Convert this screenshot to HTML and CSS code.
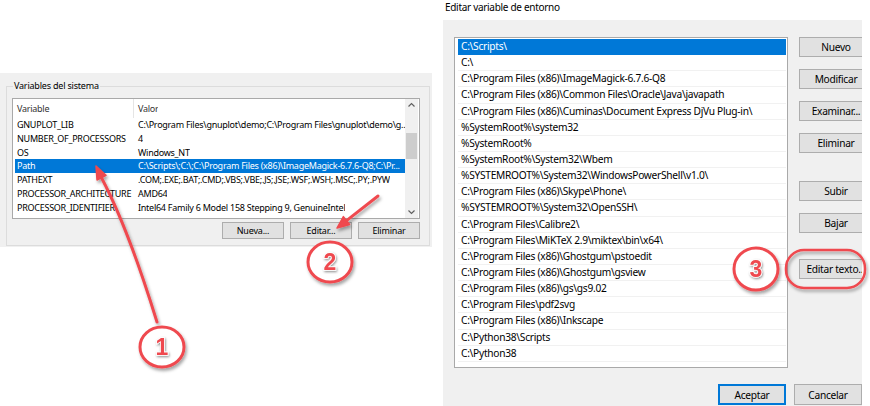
FILE: index.html
```html
<!DOCTYPE html>
<html lang="es">
<head>
<meta charset="utf-8">
<title>Variables de entorno</title>
<link rel="stylesheet" href="styles.css">
</head>
<body>
<div class="page">
  <section class="left">
    <div class="sys">
      <div class="group">
        <div class="group-label">Variables del sistema</div>
        <div class="lv">
          <div class="lv-body">
            <div class="lv-head"><span class="c1">Variable</span><span class="c2">Valor</span></div>
            <div class="lv-row"><span class="c1">GNUPLOT_LIB</span><span class="c2">C:\Program Files\gnuplot\demo;C:\Program Files\gnuplot\demo\g...</span></div>
            <div class="lv-row"><span class="c1">NUMBER_OF_PROCESSORS</span><span class="c2">4</span></div>
            <div class="lv-row"><span class="c1">OS</span><span class="c2">Windows_NT</span></div>
            <div class="lv-row sel"><span class="c1">Path</span><span class="c2">C:\Scripts\;C:\;C:\Program Files (x86)\ImageMagick-6.7.6-Q8;C:\Pr...</span></div>
            <div class="lv-row"><span class="c1">PATHEXT</span><span class="c2">.COM;.EXE;.BAT;.CMD;.VBS;.VBE;.JS;.JSE;.WSF;.WSH;.MSC;.PY;.PYW</span></div>
            <div class="lv-row"><span class="c1">PROCESSOR_ARCHITECTURE</span><span class="c2">AMD64</span></div>
            <div class="lv-row"><span class="c1">PROCESSOR_IDENTIFIER</span><span class="c2">Intel64 Family 6 Model 158 Stepping 9, GenuineIntel</span></div>
          </div>
          <div class="vscroll">
            <svg class="sb-arrow" width="13" height="12" viewBox="0 0 13 12"><path d="M3.5 7.5 L6.5 4.5 L9.5 7.5" fill="none" stroke="#606060" stroke-width="1.2"/></svg>
            <div class="sb-track"><div class="sb-thumb"></div></div>
            <svg class="sb-arrow" width="13" height="12" viewBox="0 0 13 12"><path d="M3.5 4.5 L6.5 7.5 L9.5 4.5" fill="none" stroke="#606060" stroke-width="1.2"/></svg>
          </div>
        </div>
        <div class="btns">
          <button class="btn-s">Nueva...</button>
          <button class="btn-s">Editar...</button>
          <button class="btn-s">Eliminar</button>
        </div>
      </div>
    </div>
  </section>

  <section class="right">
    <div class="title">Editar variable de entorno</div>
    <div class="dlg">
      <div class="dlg-main">
        <div class="lb">
          <div class="lb-row sel">C:\Scripts\</div>
          <div class="lb-row">C:\</div>
          <div class="lb-row">C:\Program Files (x86)\ImageMagick-6.7.6-Q8</div>
          <div class="lb-row">C:\Program Files (x86)\Common Files\Oracle\Java\javapath</div>
          <div class="lb-row">C:\Program Files (x86)\Cuminas\Document Express DjVu Plug-in\</div>
          <div class="lb-row">%SystemRoot%\system32</div>
          <div class="lb-row">%SystemRoot%</div>
          <div class="lb-row">%SystemRoot%\System32\Wbem</div>
          <div class="lb-row">%SYSTEMROOT%\System32\WindowsPowerShell\v1.0\</div>
          <div class="lb-row">C:\Program Files (x86)\Skype\Phone\</div>
          <div class="lb-row">%SYSTEMROOT%\System32\OpenSSH\</div>
          <div class="lb-row">C:\Program Files\Calibre2\</div>
          <div class="lb-row">C:\Program Files\MiKTeX 2.9\miktex\bin\x64\</div>
          <div class="lb-row">C:\Program Files (x86)\Ghostgum\pstoedit</div>
          <div class="lb-row">C:\Program Files (x86)\Ghostgum\gsview</div>
          <div class="lb-row">C:\Program Files (x86)\gs\gs9.02</div>
          <div class="lb-row">C:\Program Files\pdf2svg</div>
          <div class="lb-row">C:\Program Files (x86)\Inkscape</div>
          <div class="lb-row">C:\Python38\Scripts</div>
          <div class="lb-row">C:\Python38</div>
        </div>
        <div class="side">
          <button class="btn-r">Nuevo</button>
          <button class="btn-r">Modificar</button>
          <button class="btn-r">Examinar...</button>
          <button class="btn-r">Eliminar</button>
          <button class="btn-r gap-l">Subir</button>
          <button class="btn-r">Bajar</button>
          <button class="btn-r gap-m">Editar texto...</button>
        </div>
      </div>
      <div class="dlg-foot">
        <button class="btn-r default">Aceptar</button>
        <button class="btn-r">Cancelar</button>
      </div>
    </div>
  </section>

  <svg class="annot" width="870" height="406" viewBox="0 0 870 406">
    <defs>
      <filter id="sh" x="-30%" y="-30%" width="160%" height="160%">
        <feDropShadow dx="1.5" dy="2.5" stdDeviation="1.6" flood-color="#000" flood-opacity="0.35"/>
      </filter>
      <filter id="tsh" x="-30%" y="-30%" width="160%" height="160%">
        <feDropShadow dx="0.8" dy="1.2" stdDeviation="0.8" flood-color="#000" flood-opacity="0.45"/>
      </filter>
    </defs>
    <g class="arrows" filter="url(#sh)">
      <path class="ln" d="M157 322 Q128 228 101.5 177.7"/>
      <path class="hd" d="M96 166 L106 175.4 L97 180 Z"/>
      <path class="ln" d="M378 196 L346.5 220.6"/>
      <path class="hd" d="M337 228 L349.6 224.5 L343.4 216.6 Z"/>
    </g>
    <g filter="url(#sh)">
      <ellipse class="ring" cx="162" cy="347" rx="22" ry="20"/>
      <ellipse class="ring" cx="330" cy="262" rx="22" ry="20"/>
      <ellipse class="ring" cx="756" cy="269" rx="22" ry="21"/>
      <rect class="ring-o" x="786" y="250" width="79" height="38" rx="18" ry="18"/>
    </g>
    <g class="nums" filter="url(#tsh)">
      <text x="162" y="355">1</text>
      <text x="330" y="270">2</text>
      <text x="756" y="277">3</text>
    </g>
  </svg>
</div>
</body>
</html>
```

FILE: styles.css
```css
* { box-sizing: border-box; }
html, body { margin: 0; padding: 0; background: #fff; }
body { width: 870px; height: 406px; overflow: hidden; font-family: "Noto Sans", "Open Sans", sans-serif; color: #000; }

.page { position: relative; display: flex; align-items: flex-start; width: 870px; height: 406px; }

/* ---------- left: system variables ---------- */
.left { width: 432px; padding-top: 73px; }
.sys { background: #f0f0f0; height: 174px; padding: 13px 2px 1px 6px; }
.group { border: 1px solid #dcdcdc; height: 160px; padding: 0 9px 0 5px; display: flex; flex-direction: column; }
.group-label { align-self: flex-start; margin: -8px 0 0 1px; padding: 0 1px; background: #f0f0f0; font-size: 9px; letter-spacing: -0.2px; line-height: 14px; }

.lv { margin-top: 5px; height: 121px; border: 1px solid #a9a9a9; background: #fff; display: flex; overflow: hidden; }
.lv-body { flex: 1; padding-left: 2px; overflow: hidden; font-size: 9px; letter-spacing: -0.26px; }
.lv-head, .lv-row { display: flex; white-space: nowrap; }
.lv-head { height: 19px; align-items: center; color: #333; }
.lv-row { height: 13.8px; line-height: 13.8px; }
.c1 { width: 119px; padding-left: 2px; flex: none; overflow: hidden; }
.lv-head .c1 { border-right: 1px solid #e5e5e5; height: 19px; line-height: 19px; }
.c2 { padding-left: 4px; overflow: hidden; }
.lv-row.sel { background: #0078d7; color: #fff; }

.vscroll { width: 13px; flex: none; background: #f0f0f0; display: flex; flex-direction: column; margin-right: 1px; }
.sb-arrow { display: block; flex: none; }
.sb-track { flex: 1; padding-top: 22px; display: flex; justify-content: center; }
.sb-thumb { width: 11px; height: 26px; background: #cdcdcd; }

.btns { display: flex; justify-content: flex-end; gap: 6px; margin-top: 3px; }
.btn-s { width: 62px; height: 17px; padding: 0; background: #e1e1e1; border: 1px solid #adadad; font-family: inherit; font-size: 9px; letter-spacing: -0.2px; color: #000; }

/* ---------- right: edit dialog ---------- */
.right { width: 419px; margin-left: 11px; }
.title { height: 20px; padding: 0 0 0 2px; font-size: 10px; letter-spacing: -0.3px; line-height: 14px; }
.dlg { height: 386px; background: #f0f0f0; overflow: hidden; padding: 17px 0 0 11px; }
.dlg-main { display: flex; gap: 11px; }

.lb { width: 334px; height: 331px; flex: none; background: #fff; border: 1px solid #a9a9a9; padding: 1px 1px 0 3px; overflow: hidden; font-size: 10.2px; letter-spacing: -0.28px; }
.lb-row { height: 16.15px; line-height: 15px; padding-left: 3px; border-bottom: 1px solid #f1f1f1; white-space: nowrap; overflow: hidden; }
.lb-row.sel { background: #0078d7; color: #fff; border-bottom-color: #0078d7; }

.side { display: flex; flex-direction: column; gap: 12px; flex: none; }
.btn-r { width: 74px; height: 20px; padding: 0; background: #e1e1e1; border: 1px solid #adadad; font-family: inherit; font-size: 10.2px; letter-spacing: -0.28px; color: #000; white-space: nowrap; }
.side .btn-r { flex: none; }
.gap-l { margin-top: 16px; }
.gap-m { margin-top: 14px; }

.dlg-foot { display: flex; gap: 8px; padding-left: 264px; margin-top: 16px; }
.btn-r.default { border: 2px solid #0078d7; }
.dlg-foot .btn-r { height: 21px; }

/* ---------- annotations ---------- */
.annot { position: absolute; left: 0; top: 0; pointer-events: none; }
.ln { fill: none; stroke: #ef4a4f; stroke-width: 3; stroke-linecap: round; }
.hd { fill: #ef4a4f; stroke: #ef4a4f; stroke-width: 1.5; stroke-linejoin: round; }
.ring { fill: #fff; stroke: #ef4a4f; stroke-width: 3; }
.ring-o { fill: none; stroke: #ef4a4f; stroke-width: 2.5; }
.nums text { font-family: "Liberation Sans", Arial, sans-serif; font-weight: bold; font-size: 23px; text-anchor: middle; fill: #ef4a4f; stroke: #fff; stroke-width: 1.5; paint-order: stroke; }
```
